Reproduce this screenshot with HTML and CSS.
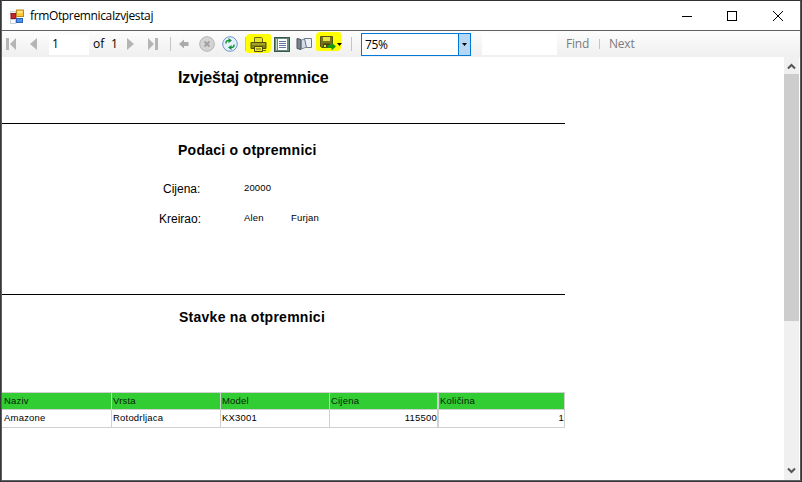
FILE: index.html
```
<!DOCTYPE html>
<html lang="hr">
<head>
<meta charset="utf-8">
<title>frmOtpremnicaIzvjestaj</title>
<link rel="stylesheet" href="styles.css">
</head>
<body>
<div class="window">
  <header class="titlebar">
    <svg class="app-icon" width="15" height="15" viewBox="0 0 15 15">
      <path d="M.5 2.500h5v3h-5zM.5 10.500h5v4h-5z" fill="#fff" stroke="#c8cdd2"/>
      <rect x="1" y="4.500" width="5" height="5" fill="#c1272d" stroke="#8f1518"/>
      <rect x="6.500" y="1" width="7" height="6.500" fill="#fbc937" stroke="#b98a1c"/>
      <rect x="7.500" y="2" width="5" height="2" fill="#ffe58a"/>
      <rect x="6.500" y="9.500" width="6" height="4" fill="#4f92ee" stroke="#2b62b8"/>
    </svg>
    <span class="title">frmOtpremnicaIzvjestaj</span>
    <svg class="controls" width="104" height="12" viewBox="0 0 104 12" fill="none" stroke="#000" shape-rendering="crispEdges">
      <path d="M0 6.500h10M45.500 1.500h9v9h-9z"/>
      <path d="M91 1l10 10M101 1L91 11" shape-rendering="auto"/>
    </svg>
  </header>

  <div class="toolbar">
    <svg class="first" width="10" height="12"><path d="M0 0h3v12H0zM10 0v12L4 6z" class="nav"/></svg>
    <svg class="prev" width="7" height="12"><path d="M7 0v12L0 6z" class="nav"/></svg>
    <span class="page-box">1</span>
    <span class="of">of</span><span class="total">1</span>
    <svg class="next" width="7" height="12"><path d="M0 0v12l7-6z" class="nav"/></svg>
    <svg class="last" width="10" height="12"><path d="M0 0v12l6-6zM7 0h3v12H7z" class="nav"/></svg>
    <i class="sep sep-a"></i>
    <svg class="back" width="10" height="10"><path d="M0 5l5-4.500V3h4.500v4H5v2.500z" fill="#aaa"/></svg>
    <svg class="stop" width="16" height="16"><circle cx="8" cy="8" r="7.300" fill="#d4d4d4" stroke="#b4b4b4"/><path d="M5.500 5.500l5 5M10.500 5.500l-5 5" stroke="#a0a0a0" stroke-width="1.800"/></svg>
    <svg class="refresh" width="16" height="16"><circle cx="8" cy="8" r="7.300" fill="#e6f0fd" stroke="#7194c9"/><g fill="none" stroke="#14943a" stroke-width="1.400"><path d="M4 7.500V6.500q0-2 3-2"/><path d="M12 8.500v1q0 2-3 2"/></g><path d="M6.500 2l3.500 2.500L6.500 7zM9.500 9v5L6 11.500z" fill="#14943a"/></svg>
    <i class="sep sep-b"></i>
    <span class="mark print">
      <svg width="17" height="16"><path d="M4.500 7V1.500h7l1 1V7" fill="#e5e32a" stroke="#6b6a12"/><path d="M1 6.500h15v6H1z" fill="#84831b" stroke="#4d4c0e"/><path d="M2 8h13" stroke="#c4c32c"/><path d="M4.500 10.500h8v5h-8z" fill="#eeea38" stroke="#4d4c0e"/><path d="M6 13h5" stroke="#6b6a12"/><path d="M13 14.500h3" stroke="#3c9512"/></svg>
    </span>
    <svg class="layout" width="16" height="15"><rect x=".5" y=".5" width="15" height="14" fill="#658c7a" stroke="#38564a"/><path d="M4 2h9v11H4z" fill="#fff"/><path d="M2.500 2v11" stroke="#c5d8ce"/><path d="M5 4.500h7M5 6.500h7M5 8.500h7M5 10.500h7" stroke="#64749a"/></svg>
    <svg class="setup" width="17" height="14"><path d="M1 1.500l4 1v10l-4-1z" fill="#79818c" stroke="#4b525c"/><path d="M5.500 3l4-1.500 1 8.500-5 2z" fill="#d6dce6" stroke="#7f8896"/><path d="M8.500 1.500h7v9h-5z" fill="#edf2fa" stroke="#6c7789"/></svg>
    <span class="mark save">
      <svg width="16" height="16"><path d="M.5 1.500h12v11H2l-1.500-1z" fill="#77751b" stroke="#53520f"/><path d="M3 2h7v4H3z" fill="#e6e349"/><path d="M3 8.500h7V12H3z" fill="#45450f"/><path d="M4 10h2v2H4z" fill="#e9e64a"/><path d="M7.500 10h4V7.500L16 11.500l-4.500 4V13h-4z" fill="#16980f"/></svg>
    </span>
    <svg class="save-arrow" width="5" height="3"><path d="M0 0h5L2.500 3z"/></svg>
    <i class="sep sep-c"></i>
    <div class="combo"><span>75%</span><b><svg width="5" height="3"><path d="M0 0h5L2.500 3z"/></svg></b></div>
    <span class="search"></span>
    <span class="find">Find</span>
    <i class="sep sep-d"></i>
    <span class="next-link">Next</span>
  </div>

  <div class="viewer">
    <main class="report">
      <h1>Izvještaj otpremnice</h1>
      <section class="details">
        <h2>Podaci o otpremnici</h2>
        <div class="field"><label>Cijena:</label><span class="value">20000</span></div>
        <div class="field second"><label>Kreirao:</label><span class="value">Alen</span><span class="surname">Furjan</span></div>
      </section>
      <section class="items">
        <h2>Stavke na otpremnici</h2>
        <div class="table">
          <div class="cell head">Naziv</div><div class="cell head">Vrsta</div><div class="cell head">Model</div><div class="cell head">Cijena</div><div class="cell head wide">Količina</div>
          <div class="cell">Amazone</div><div class="cell">Rotodrljaca</div><div class="cell">KX3001</div><div class="cell num">115500</div><div class="cell num wide">1</div>
        </div>
      </section>
    </main>
    <aside class="scrollbar">
      <svg width="9" height="7"><path d="M1 5.500l3.500-3.500L8 5.500" fill="none" stroke="#555" stroke-width="2"/></svg>
      <div class="thumb"></div>
      <svg class="down" width="9" height="7"><path d="M1 1.500L4.500 5 8 1.500" fill="none" stroke="#555" stroke-width="2"/></svg>
    </aside>
  </div>
</div>
</body>
</html>
```
FILE: styles.css
```
* { box-sizing: border-box; }
body { margin: 0; width: 802px; height: 482px; overflow: hidden; background: #34363a; font-family: "Liberation Sans", Arial, sans-serif; color: #000; }
svg { display: block; flex: none; }
.window { margin-left: 1px; width: 800px; height: 481px; border: 1px solid #606164; border-top-color: #303134; border-right-color: #55565a; background: #fff; }

.titlebar { display: flex; height: 30px; align-items: center; padding: 0 14px 0 8px; border-bottom: 1px solid #606164; }
.title { margin-left: 5px; font: 12px/16px "Open Sans", sans-serif; letter-spacing: -0.36px; margin-top: 1px; }
.controls { margin-left: auto; }
.app-icon { margin-top: 1px; }

.toolbar { display: flex; align-items: center; height: 26px; padding-left: 4px; background: linear-gradient(#fdfdfd, #efefef); font: 12px/20px "Open Sans", sans-serif; white-space: nowrap; }
.toolbar > * { flex: none; }
.nav { fill: #b5b5b5; }
.prev { margin-left: 14px; }
.page-box { width: 40px; height: 21px; margin: 1px 0 0 12px; padding-left: 3px; background: #fff; }
.of { width: 18px; margin-left: 4px; }
.total { width: 8px; }
.next { margin-left: 8px; }
.last { margin-left: 14px; }
.sep { width: 1px; height: 14px; background: #c4c4c4; }
.sep-a { margin-left: 12px; }
.back { margin-left: 8px; }
.stop { margin-left: 10px; }
.refresh { margin-left: 7px; }
.sep-b { margin-left: 7px; }
.mark { display: flex; align-items: center; height: 19px; background: #ff0; border-radius: 4px 2px 4px 2px; }
.print { width: 25px; margin-top: -2px; padding: 2px 0 0 4px; }
.layout { margin-left: 3px; }
.setup { margin-left: 6px; }
.save { width: 25px; margin: -6px 0 0 3px; padding: 4px 0 0 4px; }
.save-arrow { margin: 1px 0 0 -4px; z-index: 1; }
.sep-c { margin-left: 9px; }
.combo { display: flex; width: 110px; height: 23px; margin-left: 9px; border: 1px solid #0078d7; background: #fff; line-height: 22px; }
.combo span { width: 96px; padding-left: 3px; letter-spacing: -0.3px; }
.combo b { display: grid; place-items: center; width: 12px; border-left: 1px solid #0078d7; background: #b5d7f3; }
.search { width: 75px; height: 22px; margin-left: 11px; background: #fff; }
.find, .next-link { color: #7b7b7b; letter-spacing: -0.2px; }
.find { width: 24px; margin-left: 9px; }
.sep-d { margin-left: 9px; height: 10px; }
.next-link { margin-left: 9px; }

.viewer { display: flex; height: 423px; }
.report { width: 563px; }
h1, h2 { margin: 0; font-weight: bold; line-height: 20px; white-space: nowrap; }
h1 { height: 67px; padding: 11px 0 0 176px; border-bottom: 1px solid #000; font-size: 16px; letter-spacing: -0.12px; }
h2 { font-size: 14px; letter-spacing: 0.26px; }
.details { height: 171px; padding-top: 16px; border-bottom: 1px solid #000; }
.details h2 { padding-left: 176px; }
.field { display: flex; height: 20px; margin-top: 19px; line-height: 20px; font-size: 9.5px; }
.field label { width: 81px; margin-left: 161px; font-size: 12px; }
.second { margin-top: 10px; }
.second label { width: 85px; margin-left: 157px; }
.value { width: 47px; line-height: 18px; }
.value, .surname { letter-spacing: 0.15px; }
.surname { line-height: 18px; }
.items { padding-top: 12px; }
.items h2 { padding-left: 177px; }
.table { display: grid; grid-template-columns: 110px 109px 109px 108px 127px; grid-template-rows: 17px 18px; margin-top: 65px; border-bottom: 1px solid #d0d0d0; font-size: 9.5px; line-height: 16px; letter-spacing: 0.2px; }
.cell { padding: 0 1px; border-top: 1px solid #d0d0d0; border-right: 1px solid #d0d0d0; white-space: nowrap; }
.cell:nth-child(5n + 1) { padding-left: 2px; }
.head { background: #32cd32; color: #06220a; }
.wide { border-left: 1px solid #d0d0d0; padding-right: 0; }
.num { text-align: right; }
.num:not(.wide) { padding-right: 0; }

.scrollbar { display: flex; flex-direction: column; align-items: center; width: 15px; margin-left: 219px; padding: 6px 0 6px; background: #f0f0f0; }
.thumb { width: 15px; height: 247px; margin-top: 4px; background: #cdcdcd; }
.down { margin-top: auto; }
```
